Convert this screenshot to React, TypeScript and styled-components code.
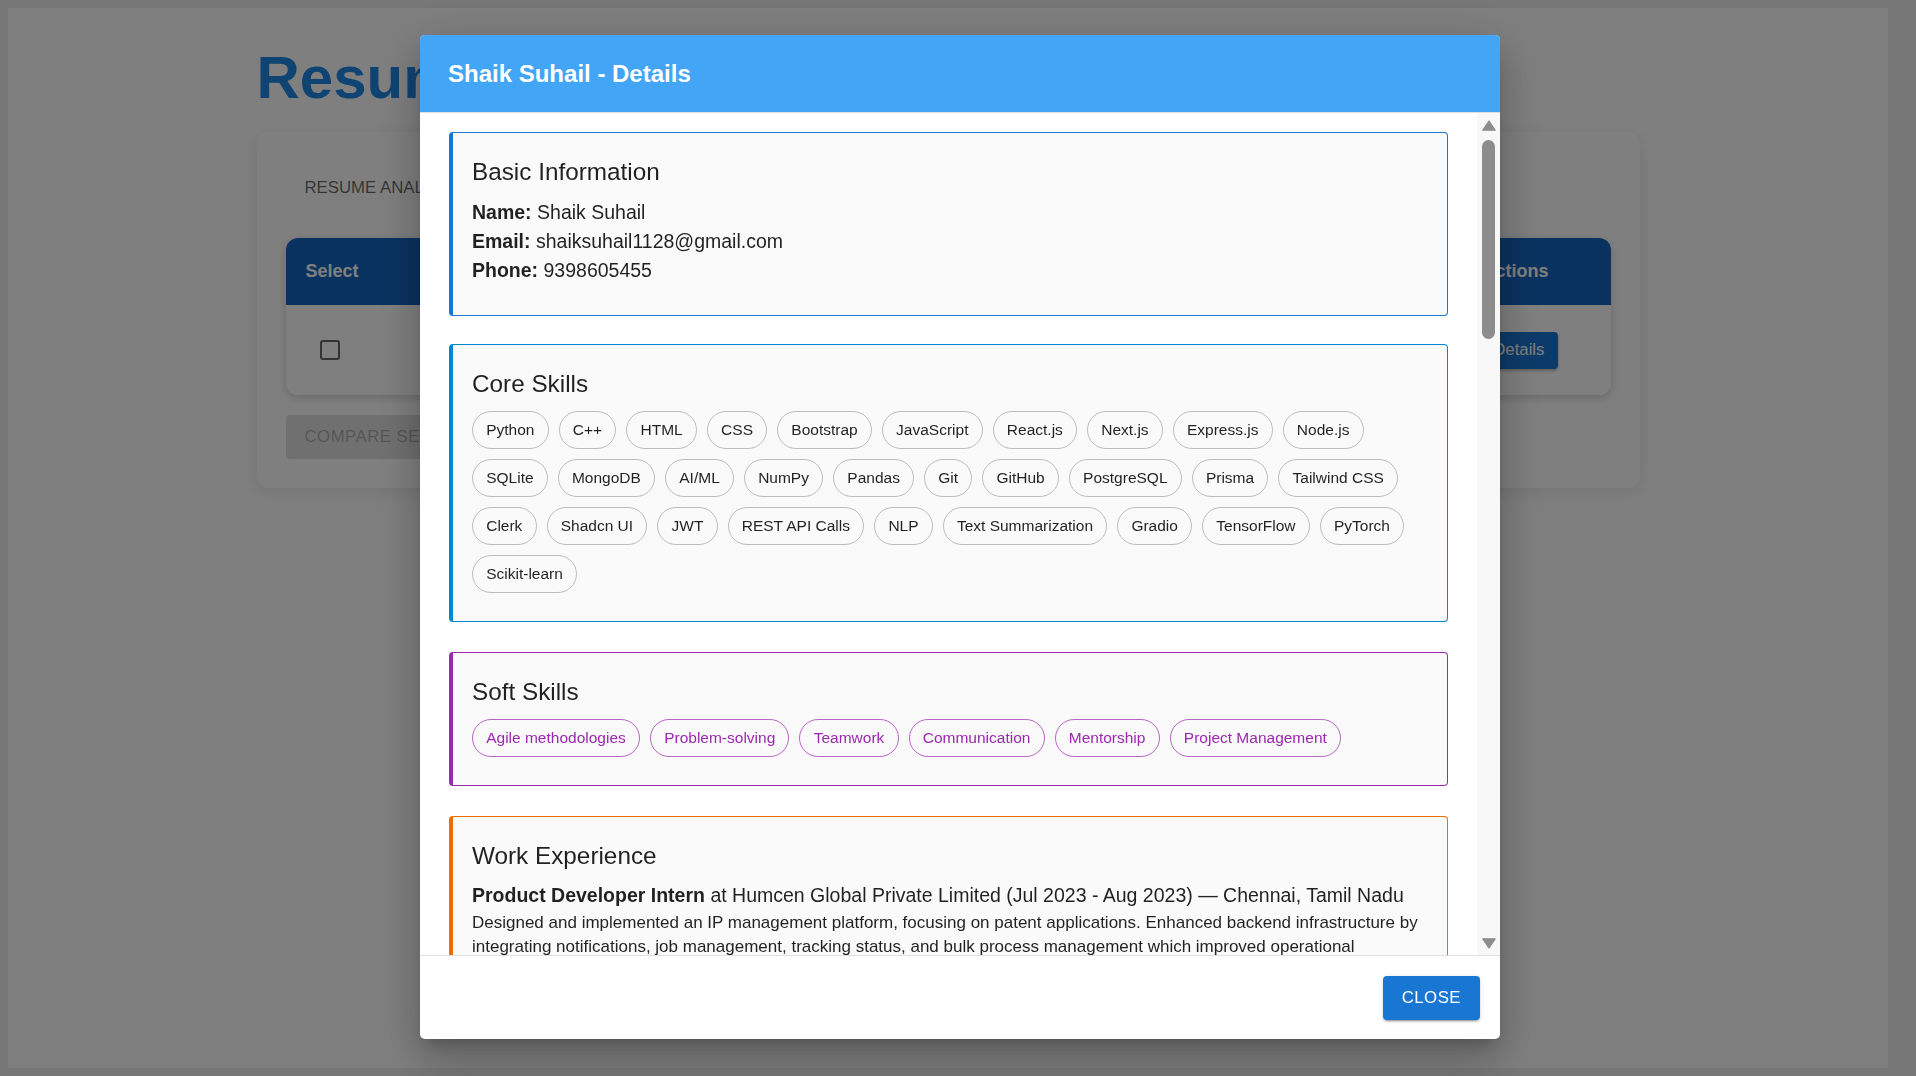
import React from 'react';
import styled, { createGlobalStyle } from 'styled-components';

const GlobalStyle = createGlobalStyle`
  * { box-sizing: border-box; }
  html { background: #eeeeee; }
  body {
    margin: 8px;
    padding-right: 20px;
    overflow: hidden;
    background: #eeeeee;
    font-family: 'Liberation Sans', Arial, Helvetica, sans-serif;
    color: rgba(0, 0, 0, 0.87);
  }
`;

/* ---------- page behind the dialog ---------- */

const Page = styled.div`
  min-height: calc(100vh - 16px);
  background: #ffffff;
  padding-top: 34px;
`;

const Wrapper = styled.div`
  width: 1383px;
  margin: 0 auto;
`;

const PageTitle = styled.h1`
  margin: 0 0 18px;
  font-size: 60px;
  line-height: 72px;
  font-weight: 700;
  color: #1e88e5;
`;

const MainCard = styled.div`
  background: #ffffff;
  border-radius: 12px;
  padding: 29px;
  box-shadow: 0 4px 18px rgba(0, 0, 0, 0.1);
`;

const TabsRow = styled.div`
  display: flex;
  height: 58px;
  margin-bottom: 19px;
`;

const Tab = styled.div`
  display: flex;
  align-items: center;
  padding: 0 19px 4px;
  font-size: 16.8px;
  text-transform: uppercase;
  color: rgba(0, 0, 0, 0.6);
`;

const Table = styled.div`
  border-radius: 12px;
  overflow: hidden;
  box-shadow: 0 3px 10px rgba(0, 0, 0, 0.18);
`;

const TableRow = styled.div<{ $head?: boolean }>`
  display: grid;
  grid-template-columns: 150px 1.2fr 1.5fr 1fr 220px;
  height: ${(p) => (p.$head ? '67px' : '90px')};
  background: ${(p) => (p.$head ? '#1565c0' : '#ffffff')};
  color: ${(p) => (p.$head ? '#ffffff' : 'rgba(0,0,0,0.87)')};
  font-weight: ${(p) => (p.$head ? 700 : 400)};
  font-size: ${(p) => (p.$head ? '18px' : '16.8px')};
`;

const Cell = styled.div<{ $right?: number; $left?: number }>`
  display: flex;
  align-items: center;
  justify-content: ${(p) => (p.$right !== undefined ? 'flex-end' : 'flex-start')};
  padding-left: ${(p) => p.$left ?? 20}px;
  padding-right: ${(p) => p.$right ?? 20}px;
  white-space: nowrap;
  overflow: hidden;
`;

const CheckBox = styled.span`
  width: 20px;
  height: 20px;
  border: 2px solid rgba(0, 0, 0, 0.6);
  border-radius: 3px;
`;

const ViewButton = styled.button`
  height: 37px;
  padding: 0 14px;
  border: none;
  border-radius: 4px;
  background: #1976d2;
  color: #ffffff;
  font-family: inherit;
  font-size: 16.8px;
  box-shadow: 0 2px 3px rgba(0, 0, 0, 0.25);
`;

const CompareButton = styled.button`
  margin-top: 20px;
  height: 44px;
  padding: 0 19px;
  border: none;
  border-radius: 4px;
  background: #e0e0e0;
  color: rgba(0, 0, 0, 0.26);
  font-family: inherit;
  font-size: 16.8px;
  letter-spacing: 0.48px;
  text-transform: uppercase;
`;

/* ---------- dialog ---------- */

const Backdrop = styled.div`
  position: fixed;
  inset: 0;
  background: rgba(0, 0, 0, 0.5);
  z-index: 10;
`;

const DialogLayer = styled.div`
  position: fixed;
  inset: 0;
  z-index: 11;
  display: flex;
  justify-content: center;
  align-items: flex-start;
  padding: 35px 0 0 4px;
`;

const Dialog = styled.div`
  width: 1080px;
  height: 1004px;
  display: flex;
  flex-direction: column;
  background: #ffffff;
  border-radius: 5px;
  overflow: hidden;
  box-shadow: 0 11px 15px -7px rgba(0, 0, 0, 0.2), 0 24px 38px 3px rgba(0, 0, 0, 0.14),
    0 9px 46px 8px rgba(0, 0, 0, 0.12);
`;

const DialogHeader = styled.h2`
  flex: none;
  margin: 0;
  height: 77px;
  display: flex;
  align-items: center;
  padding: 0 28px;
  background: #42a5f5;
  color: #ffffff;
  font-size: 24px;
  font-weight: 700;
`;

const DialogBody = styled.div`
  flex: 1;
  min-height: 0;
  display: flex;
  border-top: 1px solid rgba(0, 0, 0, 0.12);
  border-bottom: 1px solid rgba(0, 0, 0, 0.12);
`;

const ScrollArea = styled.div`
  flex: 1;
  min-width: 0;
  overflow: hidden;
  padding: 19px 29px 20px;
`;

const ScrollRail = styled.div`
  flex: none;
  width: 23px;
  display: flex;
  flex-direction: column;
  align-items: center;
  background: #f8f8f8;
`;

const RailArrow = styled.svg<{ $down?: boolean }>`
  display: block;
  flex: none;
  margin: ${(p) => (p.$down ? 'auto 0 6px' : '7px 0 0')};
`;

const Thumb = styled.div`
  flex: none;
  width: 13px;
  height: 199px;
  margin-top: 9px;
  border-radius: 7px;
  background: #8d8d8d;
`;

const DialogFooter = styled.div`
  flex: none;
  display: flex;
  justify-content: flex-end;
  padding: 20px 20px 19px;
`;

const CloseButton = styled.button`
  height: 44px;
  padding: 0 19px;
  border: none;
  border-radius: 4px;
  background: #1976d2;
  color: #ffffff;
  font-family: inherit;
  font-size: 16.8px;
  letter-spacing: 0.48px;
  text-transform: uppercase;
  box-shadow: 0 3px 1px -2px rgba(0, 0, 0, 0.2), 0 2px 2px 0 rgba(0, 0, 0, 0.14),
    0 1px 5px 0 rgba(0, 0, 0, 0.12);
`;

const Section = styled.section<{ $color: string }>`
  background: #fafafa;
  border: 1px solid ${(p) => p.$color};
  border-left: 4px solid ${(p) => p.$color};
  border-radius: 4px;
  padding: 20px 22px 28px 19px;
  margin-bottom: 30px;

  &:first-child {
    margin-bottom: 28px;
  }
  &:last-child {
    margin-bottom: 0;
  }
`;

const SectionTitle = styled.h6`
  margin: 0 0 8px;
  font-size: 24.3px;
  line-height: 38px;
  font-weight: 400;
  color: rgba(0, 0, 0, 0.87);
`;

const InfoBlock = styled.div`
  margin-top: -1px;
  padding-bottom: 3px;
`;

const InfoLine = styled.p`
  margin: 0;
  font-size: 19.5px;
  line-height: 28.8px;

  b {
    font-weight: 700;
  }
`;

const ChipList = styled.div`
  display: flex;
  flex-wrap: wrap;
  gap: 10px;
`;

const Chip = styled.span<{ $tone?: 'purple' }>`
  display: inline-flex;
  align-items: center;
  height: 38px;
  padding: 0 13.2px;
  border-radius: 19px;
  font-size: 15.5px;
  white-space: nowrap;
  color: ${(p) => (p.$tone === 'purple' ? '#9c27b0' : 'rgba(0,0,0,0.87)')};
  border: 1px solid ${(p) => (p.$tone === 'purple' ? 'rgba(156, 39, 176, 0.7)' : '#bdbdbd')};
`;

const Entry = styled.div`
  margin-bottom: 16px;

  &:last-child {
    margin-bottom: 0;
  }
`;

const EntryHead = styled.p`
  margin: 1px 0 4px;
  font-size: 19.5px;
  line-height: 24px;

  b {
    font-weight: 700;
  }
`;

const EntryText = styled.p`
  margin: 0;
  font-size: 17px;
  line-height: 23.4px;
  color: rgba(0, 0, 0, 0.87);
`;

const coreSkills = [
  'Python', 'C++', 'HTML', 'CSS', 'Bootstrap', 'JavaScript', 'React.js', 'Next.js', 'Express.js',
  'Node.js', 'SQLite', 'MongoDB', 'AI/ML', 'NumPy', 'Pandas', 'Git', 'GitHub', 'PostgreSQL',
  'Prisma', 'Tailwind CSS', 'Clerk', 'Shadcn UI', 'JWT', 'REST API Calls', 'NLP',
  'Text Summarization', 'Gradio', 'TensorFlow', 'PyTorch', 'Scikit-learn',
];

const softSkills = [
  'Agile methodologies', 'Problem-solving', 'Teamwork', 'Communication', 'Mentorship',
  'Project Management',
];

const jobs = [
  {
    role: 'Product Developer Intern',
    rest: ' at Humcen Global Private Limited (Jul 2023 - Aug 2023) — Chennai, Tamil Nadu',
    text:
      'Designed and implemented an IP management platform, focusing on patent applications. Enhanced backend infrastructure by integrating notifications, job management, tracking status, and bulk process management which improved operational efficiency by 40%. Built reusable React components and documented REST APIs for the internal team.',
  },
  {
    role: 'Web Development Intern',
    rest: ' at Bharat Intern (Jan 2023 - Mar 2023) — Remote',
    text:
      'Developed responsive web pages using HTML, CSS, Bootstrap and JavaScript. Collaborated with mentors in weekly agile sprints and delivered three client-facing landing pages with improved accessibility scores.',
  },
  {
    role: 'Machine Learning Intern',
    rest: ' at SmartBridge (Jun 2022 - Aug 2022) — Remote',
    text:
      'Trained and evaluated classification models with Scikit-learn, NumPy and Pandas. Deployed a text summarization demo with Gradio and presented results to a cohort of fifty interns.',
  },
];

const projects = [
  {
    name: 'AI Resume Analyzer',
    tech: ' — React.js, Node.js, Express.js, MongoDB',
    text:
      'Full-stack screening tool that parses uploaded resumes, extracts skills with NLP and ranks candidates against job descriptions, with side-by-side comparison of selected profiles.',
  },
  {
    name: 'Text Summarization App',
    tech: ' — Python, PyTorch, Gradio',
    text:
      'Abstractive summarizer built on a fine-tuned transformer model that condenses long articles into short summaries, served through an interactive Gradio interface.',
  },
  {
    name: 'Task Management Platform',
    tech: ' — Next.js, Prisma, PostgreSQL, Clerk, Shadcn UI',
    text:
      'Kanban-style project tracker with authentication, role-based access, drag-and-drop boards and real-time status updates for small teams.',
  },
];

const education = [
  {
    name: 'B.Tech in Computer Science and Engineering',
    rest: ' (2020 - 2024)',
    text: 'Vel Tech Rangarajan Dr. Sagunthala R&D Institute of Science and Technology, Chennai — CGPA: 8.6/10',
  },
  {
    name: 'Intermediate (MPC)',
    rest: ' (2018 - 2020)',
    text: 'Sri Chaitanya Junior College, Nellore, Andhra Pradesh — 94.2%',
  },
];

const certifications = [
  'Machine Learning Specialization — Coursera (Stanford University & DeepLearning.AI)',
  'Full Stack Web Development — Udemy',
  'Python for Data Science — NPTEL',
  'Responsive Web Design — freeCodeCamp',
];

function UpArrow() {
  return (
    <RailArrow width="14" height="11" viewBox="0 0 14 11">
      <path d="M7 1 L13.2 10.2 H0.8 Z" fill="#8d8d8d" stroke="#8d8d8d" strokeWidth="1.2" strokeLinejoin="round" />
    </RailArrow>
  );
}

function DownArrow() {
  return (
    <RailArrow $down width="14" height="11" viewBox="0 0 14 11">
      <path d="M0.8 0.8 H13.2 L7 10 Z" fill="#8d8d8d" stroke="#8d8d8d" strokeWidth="1.2" strokeLinejoin="round" />
    </RailArrow>
  );
}

export default function App() {
  return (
    <>
      <GlobalStyle />
      <Page>
        <Wrapper>
          <PageTitle>Resume Analyzer</PageTitle>
          <MainCard>
            <TabsRow>
              <Tab>Resume Analysis</Tab>
            </TabsRow>
            <Table>
              <TableRow $head>
                <Cell>Select</Cell>
                <Cell>Name</Cell>
                <Cell>Email</Cell>
                <Cell>Score</Cell>
                <Cell $right={62}>Actions</Cell>
              </TableRow>
              <TableRow>
                <Cell $left={34}>
                  <CheckBox />
                </Cell>
                <Cell>Shaik Suhail</Cell>
                <Cell>shaiksuhail1128@gmail.com</Cell>
                <Cell>86%</Cell>
                <Cell $right={52}>
                  <ViewButton>View Details</ViewButton>
                </Cell>
              </TableRow>
            </Table>
            <CompareButton disabled>Compare Selected</CompareButton>
          </MainCard>
        </Wrapper>
      </Page>

      <Backdrop />
      <DialogLayer>
        <Dialog role="dialog">
          <DialogHeader>Shaik Suhail - Details</DialogHeader>
          <DialogBody>
            <ScrollArea>
              <Section $color="#1976d2">
                <SectionTitle>Basic Information</SectionTitle>
                <InfoBlock>
                  <InfoLine>
                    <b>Name:</b> Shaik Suhail
                  </InfoLine>
                  <InfoLine>
                    <b>Email:</b> shaiksuhail1128@gmail.com
                  </InfoLine>
                  <InfoLine>
                    <b>Phone:</b> 9398605455
                  </InfoLine>
                </InfoBlock>
              </Section>

              <Section $color="#0288d1">
                <SectionTitle>Core Skills</SectionTitle>
                <ChipList>
                  {coreSkills.map((s) => (
                    <Chip key={s}>{s}</Chip>
                  ))}
                </ChipList>
              </Section>

              <Section $color="#9c27b0">
                <SectionTitle>Soft Skills</SectionTitle>
                <ChipList>
                  {softSkills.map((s) => (
                    <Chip key={s} $tone="purple">
                      {s}
                    </Chip>
                  ))}
                </ChipList>
              </Section>

              <Section $color="#ed6c02">
                <SectionTitle>Work Experience</SectionTitle>
                {jobs.map((j) => (
                  <Entry key={j.role}>
                    <EntryHead>
                      <b>{j.role}</b>
                      {j.rest}
                    </EntryHead>
                    <EntryText>{j.text}</EntryText>
                  </Entry>
                ))}
              </Section>

              <Section $color="#2e7d32">
                <SectionTitle>Projects</SectionTitle>
                {projects.map((p) => (
                  <Entry key={p.name}>
                    <EntryHead>
                      <b>{p.name}</b>
                      {p.tech}
                    </EntryHead>
                    <EntryText>{p.text}</EntryText>
                  </Entry>
                ))}
              </Section>

              <Section $color="#0288d1">
                <SectionTitle>Education</SectionTitle>
                {education.map((e) => (
                  <Entry key={e.name}>
                    <EntryHead>
                      <b>{e.name}</b>
                      {e.rest}
                    </EntryHead>
                    <EntryText>{e.text}</EntryText>
                  </Entry>
                ))}
              </Section>

              <Section $color="#1976d2">
                <SectionTitle>Certifications</SectionTitle>
                {certifications.map((c) => (
                  <InfoLine key={c}>• {c}</InfoLine>
                ))}
              </Section>
            </ScrollArea>
            <ScrollRail>
              <UpArrow />
              <Thumb />
              <DownArrow />
            </ScrollRail>
          </DialogBody>
          <DialogFooter>
            <CloseButton>Close</CloseButton>
          </DialogFooter>
        </Dialog>
      </DialogLayer>
    </>
  );
}
